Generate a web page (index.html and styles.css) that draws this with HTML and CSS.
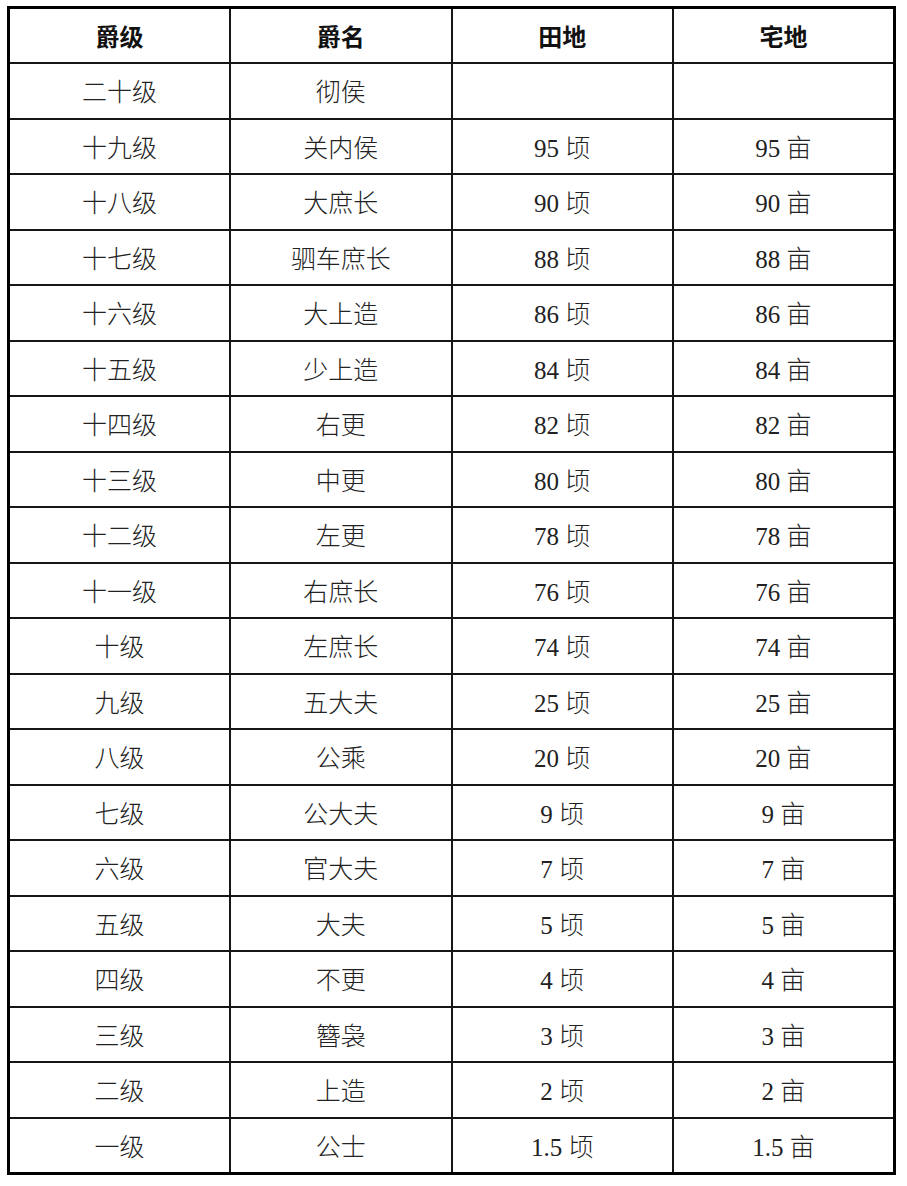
FILE: index.html
```html
<!DOCTYPE html>
<html lang="zh-CN">
<head>
<meta charset="utf-8">
<title>爵级</title>
<link rel="stylesheet" href="styles.css">
</head>
<body>
<table class="rank-table">
  <colgroup><col class="c"><col class="c"><col class="c"><col class="c"></colgroup>
  <thead>
    <tr><th>爵级</th><th>爵名</th><th>田地</th><th>宅地</th></tr>
  </thead>
  <tbody>
    <tr><td>二十级</td><td>彻侯</td><td></td><td></td></tr>
    <tr><td>十九级</td><td>关内侯</td><td>95 顷</td><td>95 亩</td></tr>
    <tr><td>十八级</td><td>大庶长</td><td>90 顷</td><td>90 亩</td></tr>
    <tr><td>十七级</td><td>驷车庶长</td><td>88 顷</td><td>88 亩</td></tr>
    <tr><td>十六级</td><td>大上造</td><td>86 顷</td><td>86 亩</td></tr>
    <tr><td>十五级</td><td>少上造</td><td>84 顷</td><td>84 亩</td></tr>
    <tr><td>十四级</td><td>右更</td><td>82 顷</td><td>82 亩</td></tr>
    <tr><td>十三级</td><td>中更</td><td>80 顷</td><td>80 亩</td></tr>
    <tr><td>十二级</td><td>左更</td><td>78 顷</td><td>78 亩</td></tr>
    <tr><td>十一级</td><td>右庶长</td><td>76 顷</td><td>76 亩</td></tr>
    <tr><td>十级</td><td>左庶长</td><td>74 顷</td><td>74 亩</td></tr>
    <tr><td>九级</td><td>五大夫</td><td>25 顷</td><td>25 亩</td></tr>
    <tr><td>八级</td><td>公乘</td><td>20 顷</td><td>20 亩</td></tr>
    <tr><td>七级</td><td>公大夫</td><td>9 顷</td><td>9 亩</td></tr>
    <tr><td>六级</td><td>官大夫</td><td>7 顷</td><td>7 亩</td></tr>
    <tr><td>五级</td><td>大夫</td><td>5 顷</td><td>5 亩</td></tr>
    <tr><td>四级</td><td>不更</td><td>4 顷</td><td>4 亩</td></tr>
    <tr><td>三级</td><td>簪袅</td><td>3 顷</td><td>3 亩</td></tr>
    <tr><td>二级</td><td>上造</td><td>2 顷</td><td>2 亩</td></tr>
    <tr><td>一级</td><td>公士</td><td>1.5 顷</td><td>1.5 亩</td></tr>
  </tbody>
</table>
</body>
</html>
```
FILE: styles.css
```css
html, body {
  margin: 0;
  padding: 0;
  background: #ffffff;
}
body {
  padding: 6px 0 0 7px;
}
.rank-table {
  border-collapse: collapse;
  table-layout: fixed;
  width: 889px;
  border: 3px solid #000;
  font-family: "Liberation Serif", "Noto Sans CJK SC", serif;
  font-size: 25px;
  color: #222;
}
.rank-table .c {
  width: 25%;
}
.rank-table th,
.rank-table td {
  border: 2px solid #161616;
  height: 55.5px;
  padding: 4px 0 0 0;
  box-sizing: border-box;
  text-align: center;
  vertical-align: middle;
  line-height: 1;
}
.rank-table th {
  font-family: "Noto Sans CJK SC", sans-serif;
  font-weight: 700;
  font-size: 24px;
  color: #111;
  padding: 0;
}
.rank-table td {
  font-weight: 300;
}
```
